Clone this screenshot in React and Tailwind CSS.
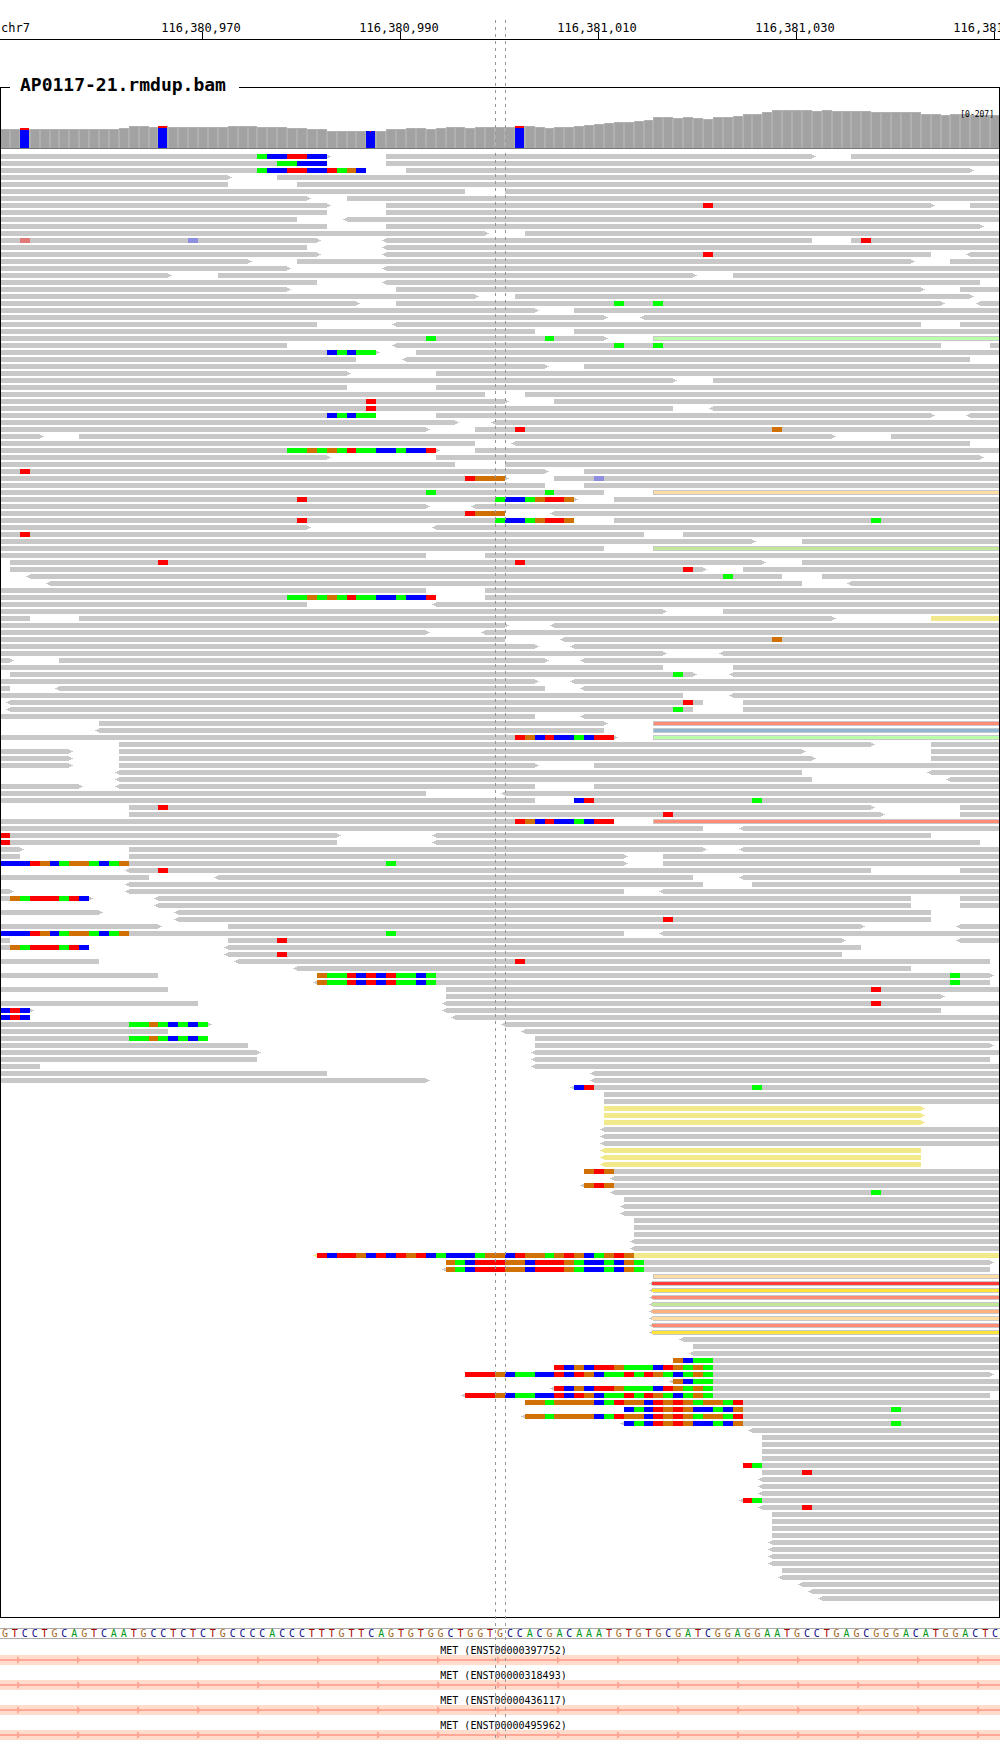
import React from "react";

const BASES = 101;
const ROW_PITCH = 7;
const READ_HEIGHT = 5;

const edge = (i) => Math.round(i * 9.9);

const READ = "#c8c8c8";
const DELETION = "#f2ea8a";

const MISMATCH = {
  A: "#00ff00",
  C: "#0000ff",
  G: "#d17105",
  T: "#ff0000",
  t: "#e07878",
  c: "#8e8ee0",
};

const MATE = {
  l: "#bcffaa",
  p: "#ffdca3",
  g: "#c3e69b",
  s: "#ff8a76",
  b: "#91b6d4",
  r: "#ff3b3b",
  w: "#ffe43b",
  o: "#ffb07c",
};

// Each line is a row of packed alignments: [colour][<]start-end[>] or position:bases
const ROWS = `0-33> 26:ACCTTCC 39-82> 86-101
0-33 28:AACCC 39-101
0-37 26:ACCTTCCTAGC 41-98>
0-23> 28-101
0-23 30-101
0-47 51-101
0-31> 35-101
0-33> 39-94> 71:T 98-101
0-33 39-101
0-30 <35-101
0-33 39-99>
0-49> 53-101
0-32> 2:t 19:c <39-82 86-101 87:T
0-31 <39-101
0-32> <39-94 71:T <98-101
0-25> 30-92> 96-101
0-29> <39-101
0-17> 22-70> 74-101
0-32 <39-99
0-29> 40-93> 97-101
0-48> 52-98>
0-36> 40-95> 62:A 66:A <99-101
0-54> 58-101
0-61> <65-101
0-32 <40-93 97-101
0-54 58-101
0-61> 43:A 55:A l66-101
0-29 <40-95 62:A 66:A 100-101
0-38> 33:CACAA 42-101
0-36 <41-98
0-55> 59-101
0-35> 44-101
0-68> 72-101
0-35 44-101
0-49 53-101
0-51> 37:T 56-101
0-68 37:T <72-101
0-38 33:CACAA 44-94> <98-101
0-46> <50-101
0-43> 48-101 52:T 78:G
0-4> 8-84> 90-101
0-48 <52-98
0-44> 29:AAGAGATAACCACCT 48-101
0-33> 44-99>
0-46 51-101
0-55> 2:T 59-101
0-51> 47:TGGG 56-101 60:c
0-55 59-101
0-61 43:A 55:A p66-101
0-58> 30:T 50:ACCAGTTG 62-101
0-43> <48-101
0-51 47:TGGG <56-101
0-58 30:T 50:ACCAGTTG 62-101 88:A
0-31> <44-101
0-65 2:T 69-101
0-76> 81-101
0-61 g66-101
0-43 49-101
1-77> 16:T 52:T 81-101
1-71> 69:T 75-101
<3-79 73:A 83-101
<5-81 <86-101
0-43 49-101
0-44 29:AAGAGATAACCACCT 49-101
0-31 <44-101
0-67> 73-101
0-3 8-84> y94-101
0-51> <56-101
0-43> <49-101
0-51 <57-101 78:G
0-54> <58-101
0-67> <73-101
0-1> 6-55> <59-101
0-67 74-101
1-70> 68:A <74-101
0-54> <58-101
0-1 <6-55 <59-101
0-69 <74-101
<1-71 69:T 75-101
<1-70 68:A 75-101
0-54 <59-101
10-61> s66-101
<10-61 b66-101
0-62> 52:TGCTCCACTT l66-101
12-88> 94-101
0-7> 12-81> 94-101
0-7> 12-82> 94-101
0-7> 12-54> 60-101
<12-81 <94-101
<12-82 <96-101
0-8> <12-54 60-101
0-43 <51-101
0-54 58-101 58:CT 76:A
13-88> 16:T 97-101
13-89> 67:T 97-101
0-62 52:TGCTCCACTT s66-101
0-71 <75-101
0-34> 0:T <44-94
0-34 0:T <44-99
0-2> 13-71> <75-101
0-2 13-63> 67-101
0-63> 0:CCCTGCAGGACAG 39:A 67-101
<13-88 16:T 97-101
0-15 <22-70 <75-101
<13-71 76-101
0-1> <13-63 <67-101
0-9> 1:GATTTATC <16-92 97-101
<16-92 97-101
0-10> <18-94
<18-94 67:T
0-16> 23-87> <97-101
0-63 0:CCCTGCAGGACAG 39:A <67-101
0-1 23-85> 28:T <97-101
0-9 1:GATTTATC <23-87
<23-85 28:T
0-10 <24-100 52:T
<30-92
0-16 32-100> 32:GAATCTCTAACA 96:A
<32-100 32:GAATCTCTAACA 96:A
0-17 45-101 88:T
45-95>
0-20 <45-101 88:T
0-3> 0:CTC <45-95
0-3 0:CTC <46-101
0-21> 13:AAGACACA <51-101
0-17 <53-101
0-21 13:AAGACACA 54-101
0-25 54-100>
0-26> <54-101
0-26 <54-100
0-4 <54-101
0-33 <60-101
0-43> <60-101
<58-101 58:CT 76:A
61-101
61-101
y61-93>
y61-93>
y61-93>
<61-101
<61-101
<61-101
y<61-93
y<61-93
y<61-93
59-101 59:GTG
<62-101
<59-101 59:GTG
<62-101 88:A
63-101
<63-101
<63-101
64-101
64-101
64-101
<64-101
<64-101
y<32-101 32:TCTTGCTCTGTCACCCAGGCTGGAGTGCAGTG
45-100> 45:GACTTTGGCTTTGACCACGA
<45-100 45:GACTTTGGCTTTGACCACGA
p66-101
r<66-101
w<66-101
s<66-101
g<66-101
o<66-101
p<66-101
s<66-101
w<66-101
<69-101
70-101
<70-101
68-101 68:GCAA
56-101 56:TCGCTTGAAACTGAGA
47-100> 47:TTTGCAACCTCTGCAATATGACAGA
<68-101 68:GCAA
<56-101 56:TCGCTTGAAACTGAGA
<47-100 47:TTTGCAACCTCTGCAATATGACAGA
53-101 53:GGAGGGGCATGGCTGTGAGGAT
63-101 63:CACTGTGCCACG 90:A
<53-101 53:GGAGGGGCATGGCTGTGAGGAT
<63-101 63:CACTGTGCCACG 90:A
<76-101
77-101
77-101
77-101
77-101
75-101 75:TA
77-101 81:T
<77-101
<77-101
<77-101
<75-101 75:TA
<77-101 81:T
78-101
78-101
78-101
78-101
<78-101
<78-101
<78-101
<78-101
79-101
<79-101
<81-101
<82-101
<83-101`.split("\n").map((line) => line.split(" "));

// [number of bases, top of the bar]
const COVERAGE = [
  [12, 129], [1, 128], [2, 126], [1, 127], [1, 126], [6, 127], [3, 126],
  [3, 127], [2, 128], [2, 129], [6, 131], [2, 129], [2, 128], [1, 129],
  [1, 128], [2, 127], [1, 128], [4, 127], [2, 126], [1, 127], [1, 128],
  [2, 127], [1, 126], [1, 125], [1, 124], [1, 123], [2, 122], [1, 121],
  [1, 120], [2, 117], [1, 118], [1, 117], [1, 118], [1, 119], [2, 117],
  [1, 116], [2, 114], [1, 112], [4, 110], [1, 111], [1, 110], [4, 111],
  [5, 112], [2, 114], [1, 115], [2, 114], [3, 115],
].flatMap(([n, top]) => Array(n).fill(top));

const VARIANTS = { 2: 128, 16: 126, 37: 131, 52: 126 };

const TICKS = [
  [202, "116,380,970"],
  [400, "116,380,990"],
  [598, "116,381,010"],
  [796, "116,381,030"],
  [994, "116,381,050"],
];

const SEQUENCE =
  "GTCCTGCAGTCAATGCCTCTCTGCCCCACCCTTTGTTCAGTGTGGCTGGTG" +
  "CCACGACAAATGTGTGCGATCGGAGGAATGCCTGAGCGGGACATGGACTC";

const BASE_TEXT = {
  A: "text-[#009614]",
  C: "text-[#0a0a8c]",
  G: "text-[#a5661a]",
  T: "text-[#a80000]",
};

const GENES = ["ENST00000397752", "ENST00000318493", "ENST00000436117", "ENST00000495962"];

function Read({ token, y }) {
  const [, kind, left, s, e, right] = token.match(/^([a-z]?)(<?)(\d+)-(\d+)(>?)$/);
  const x0 = edge(Number(s));
  const x1 = edge(Number(e));
  const fill = kind === "y" ? DELETION : READ;
  const mate = MATE[kind];
  return (
    <g fill={fill}>
      <rect x={x0} y={y} width={x1 - x0} height={READ_HEIGHT} />
      {left && <path d={`M${x0} ${y + 1}h-2v1h-2v1h2v1h2z`} />}
      {right && <path d={`M${x1} ${y + 1}h2v1h2v1h-2v1h-2z`} />}
      {mate && left && (
        <>
          <rect x={x0 - 1} y={y} width={1} height={1} />
          <rect x={x0 - 1} y={y + 1} width={x1 - x0 + 1} height={3} fill={mate} />
        </>
      )}
      {mate && !left && <rect x={x0 + 1} y={y + 1} width={x1 - x0 - 1} height={3} fill={mate} />}
    </g>
  );
}

function Mismatches({ token, y }) {
  const [pos, letters] = token.split(":");
  return [...letters].map((b, k) => {
    const i = Number(pos) + k;
    return (
      <rect key={k} x={edge(i)} y={y} width={edge(i + 1) - edge(i)} height={READ_HEIGHT} fill={MISMATCH[b]} />
    );
  });
}

function Ruler() {
  return (
    <svg viewBox="0 0 1000 40" className="block w-full" shapeRendering="crispEdges">
      <g className="text-[12px]" fill="#000">
        <text x="1" y="32">chr7</text>
        {TICKS.map(([x, label]) => (
          <g key={x}>
            <text x={x - 1} y="32" textAnchor="middle">{label}</text>
            <rect x={x} y="32" width="1" height="7" />
          </g>
        ))}
      </g>
      <rect x="0" y="39" width="1000" height="1" />
    </svg>
  );
}

function Coverage() {
  return (
    <svg viewBox="1 101 998 48" className="block w-full" shapeRendering="crispEdges">
      {COVERAGE.map((top, i) => {
        const x = edge(i);
        const w = edge(i + 1) - x;
        return (
          <g key={i}>
            <rect x={x} y={top} width={w} height={148 - top} fill="#b0b0b0" />
            <rect x={x + 1} y={top + 1} width={w - 2} height={147 - top} fill="#a2a2a2" />
          </g>
        );
      })}
      {Object.entries(VARIANTS).map(([i, top]) => {
        const x = edge(Number(i));
        const small = i === "37";
        return (
          <g key={i}>
            <rect x={small ? x : x} y={top} width={9} height={148 - top} fill="#0000ff" />
            <rect x={small ? x + 4 : x} y={top} width={small ? 1 : 9} height={small ? 1 : 2} fill="#ff0000" />
          </g>
        );
      })}
      <rect x="0" y="148" width="1000" height="1" fill="#777" />
      <text x="994" y="117" textAnchor="end" className="text-[8px]">[0-207]</text>
    </svg>
  );
}

function Alignments() {
  return (
    <svg viewBox="1 149 998 1468" className="block w-full" shapeRendering="crispEdges">
      {ROWS.map((tokens, r) => {
        const y = 154 + r * ROW_PITCH;
        return (
          <g key={r}>
            {tokens.map((t, k) =>
              t.includes(":") ? <Mismatches key={k} token={t} y={y} /> : <Read key={k} token={t} y={y} />
            )}
          </g>
        );
      })}
    </svg>
  );
}

function Sequence() {
  return (
    <div className="mt-[10px] grid grid-cols-[repeat(101,minmax(0,1fr))] border-y border-[#aaaaaa] text-center text-[10px] leading-[9px]">
      {[...SEQUENCE].slice(0, BASES).map((b, i) => (
        <span key={i} className={BASE_TEXT[b]}>{b}</span>
      ))}
    </div>
  );
}

function Gene({ id }) {
  return (
    <div className="pt-[6px]">
      <div className="pl-[7px] text-center text-[10px] leading-[9px]">MET ({id})</div>
      <svg viewBox="0 0 1000 10" className="block w-full">
        <rect width="1000" height="10" fill="#ffdccc" />
        <rect y="4" width="1000" height="2" fill="#ffa898" />
        {Array.from({ length: 17 }, (_, k) => (
          <path key={k} d={`M${17 + k * 60} 1l4 4l-4 4z`} fill="#ffa898" />
        ))}
      </svg>
    </div>
  );
}

const GUIDE =
  "pointer-events-none absolute top-5 bottom-0 w-px bg-[repeating-linear-gradient(to_bottom,#969696_0,#969696_3px,transparent_3px,transparent_7px)]";

export default function App() {
  return (
    <main className="relative overflow-hidden bg-white font-['DejaVu_Sans_Mono',monospace] text-black">
      <Ruler />
      <fieldset className="mt-[33px] min-w-0 border border-black">
        <legend className="ml-[9px] pr-[13px] pb-1 pl-[10px] text-[18px] leading-6 font-bold">AP0117-21.rmdup.bam</legend>
        <Coverage />
        <Alignments />
      </fieldset>
      <Sequence />
      <div className="flex flex-col pt-px">
        {GENES.map((id) => (
          <Gene key={id} id={id} />
        ))}
      </div>
      <div className={`${GUIDE} left-[49.5%]`} />
      <div className={`${GUIDE} left-[50.5%]`} />
    </main>
  );
}
